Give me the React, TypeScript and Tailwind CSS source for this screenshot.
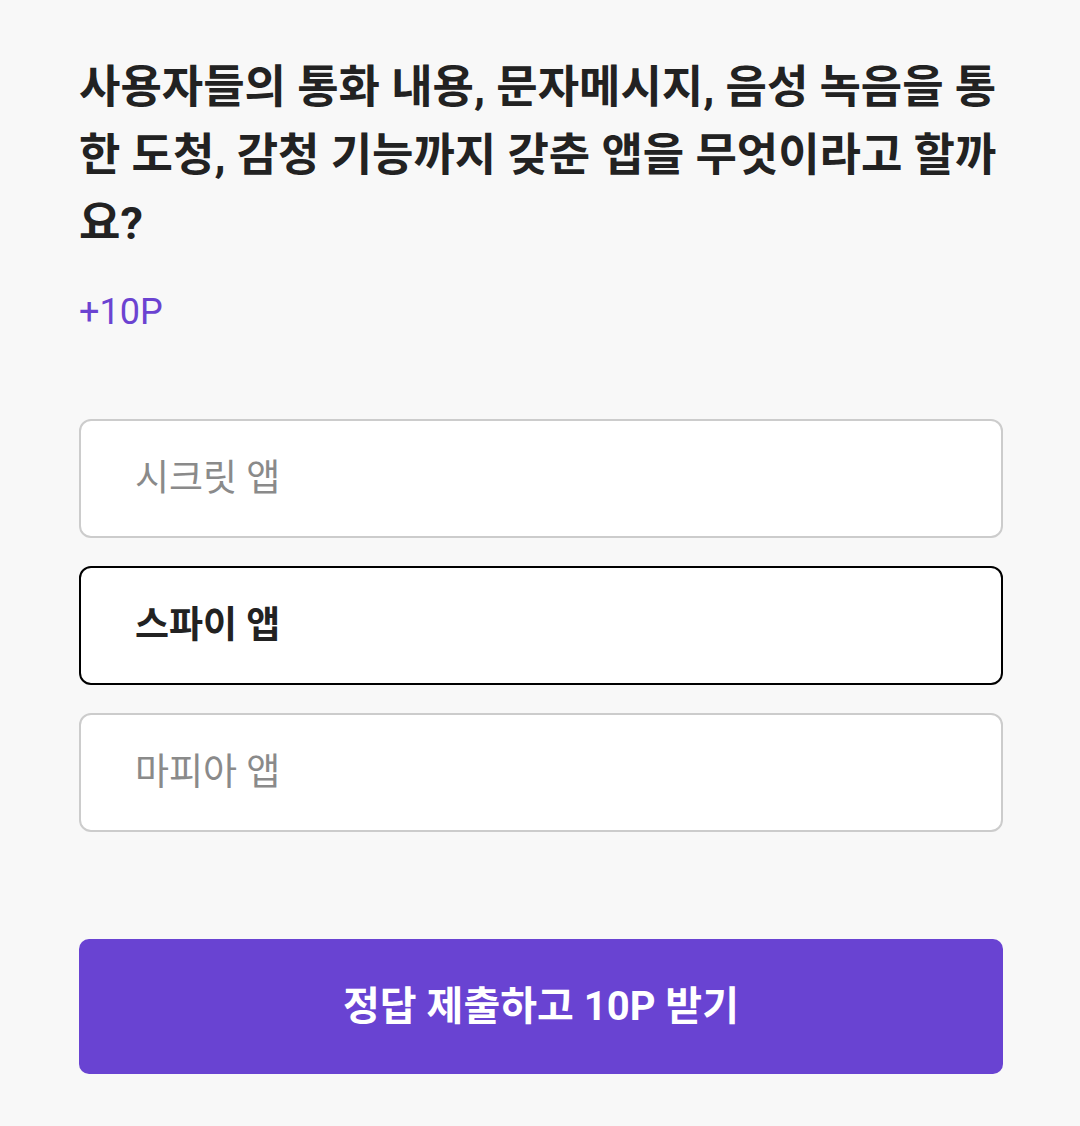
import React, { useState } from 'react';

const options = ['시크릿 앱', '스파이 앱', '마피아 앱'];

const App: React.FC = () => {
  const [selected, setSelected] = useState(1);

  return (
    <div
      className="min-h-screen bg-[#f8f8f8] pl-[79px] pr-[77px] pt-[54px] pb-[52px]"
      style={{ fontFamily: 'Roboto, "Noto Sans CJK KR", sans-serif' }}
    >
      {/* Question */}
      <h1 className="text-[45px] leading-[68px] font-bold text-[#222222]">
        사용자들의 통화 내용, 문자메시지, 음성 녹음을 통한 도청, 감청 기능까지 갖춘 앱을 무엇이라고 할까요?
      </h1>
      <div className="mt-[34px] text-[36px] leading-[40px] text-[#6b43d1]">+10P</div>

      {/* Options */}
      <div className="mt-[87px] flex flex-col gap-[28px]">
        {options.map((label, i) => {
          const active = i === selected;
          return (
            <button
              key={label}
              onClick={() => setSelected(i)}
              className={
                active
                  ? 'h-[119px] w-full rounded-[12px] border-2 border-black bg-white pl-[54px] text-left text-[37px] font-bold text-[#222222]'
                  : 'h-[119px] w-full rounded-[12px] border-2 border-[#cccccc] bg-white pl-[54px] text-left text-[37px] text-[#8a8a8a]'
              }
            >
              {label}
            </button>
          );
        })}
      </div>

      {/* Submit */}
      <button className="mt-[107px] flex h-[135px] w-full items-center justify-center rounded-[10px] bg-[#6943d2] text-[40px] font-bold text-white">
        정답 제출하고 10P 받기
      </button>
    </div>
  );
};

export default App;
